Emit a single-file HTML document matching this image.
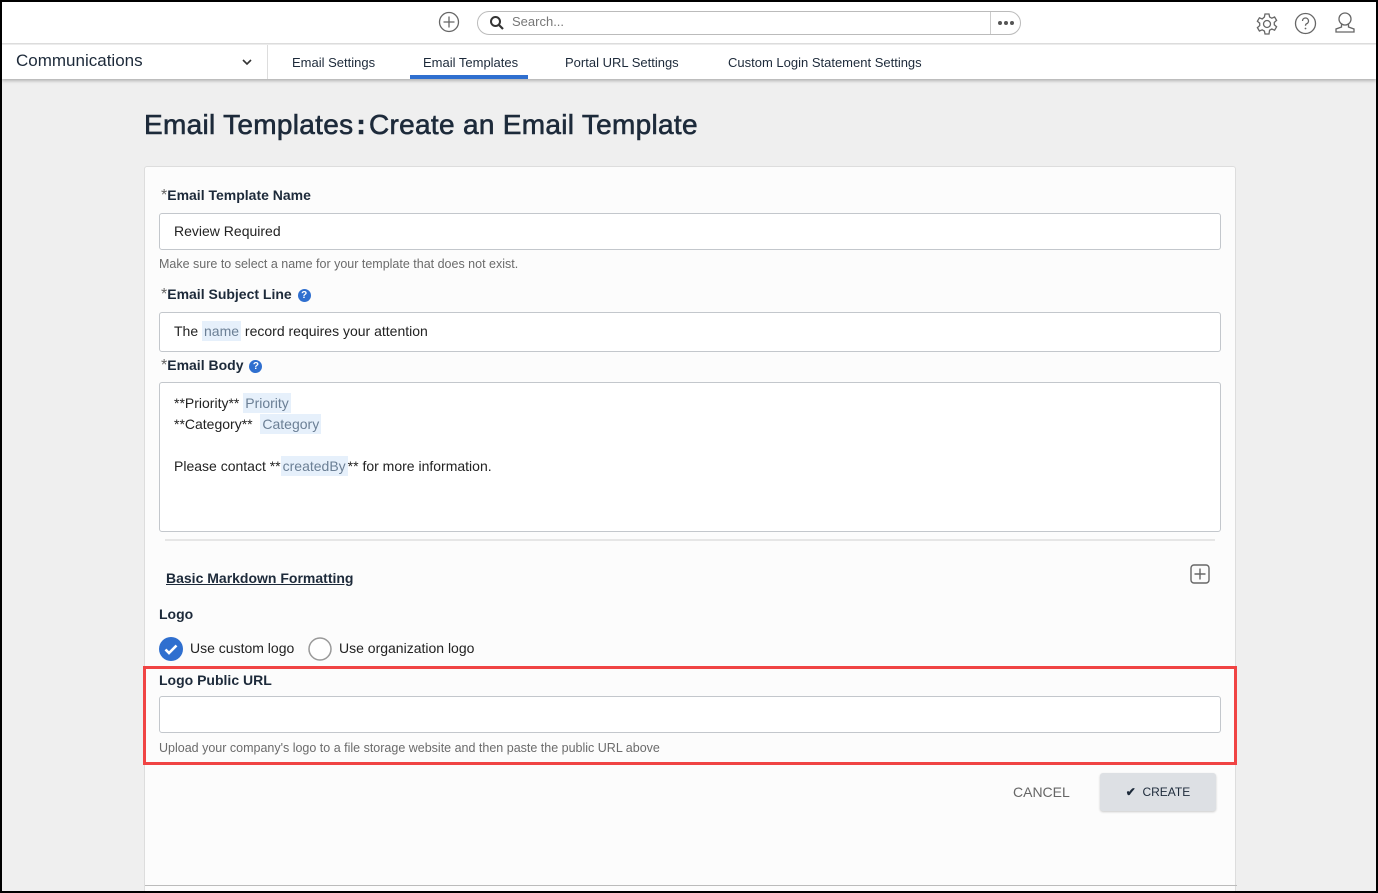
<!DOCTYPE html>
<html><head><style>
*{box-sizing:border-box;margin:0;padding:0}
body{width:1378px;height:893px;overflow:hidden;font-family:"Liberation Sans",sans-serif;background:#000;position:relative}
#frame{position:absolute;left:2px;top:2px;width:1374px;height:889px;background:#efefef;overflow:hidden}
.top{position:absolute;left:0;top:0;width:1374px;height:42px;background:#fff;border-bottom:1px solid #ddd}
.nav{position:absolute;left:0;top:43px;width:1374px;height:34px;background:#fff;box-shadow:0 2px 3px rgba(0,0,0,.25)}
.abs{position:absolute}
.navi{position:absolute;top:10px;font-size:13px;color:#1d2a3a}
.card{position:absolute;left:142px;top:164px;width:1092px;height:740px;background:#fcfcfc;border:1px solid #ddd;border-radius:3px}
.lbl{position:absolute;font-size:14px;font-weight:bold;color:#1d2a3a}
.star{color:#666;font-weight:normal;font-size:16px}
.inp{position:absolute;left:14px;width:1062px;background:#fff;border:1px solid #c3c7cc;border-radius:3px;font-size:14px;color:#222}
.help{position:absolute;font-size:12.5px;color:#6b6b6b}
.tag{background:#e6f0fb;color:#6b7f95;padding:2px 2px}
.q{display:inline-block;width:13px;height:13px;border-radius:50%;background:#2f6fcf;color:#fff;font-size:10px;text-align:center;line-height:13px;vertical-align:1px;margin-left:6px}
</style></head><body><div id="frame">
<div class="top">
<svg class="abs" style="left:436px;top:9px" width="22" height="22" viewBox="0 0 22 22"><circle cx="11" cy="11" r="9.5" fill="none" stroke="#666" stroke-width="1.3"/><path d="M11 5.5v11M5.5 11h11" stroke="#666" stroke-width="1.3"/></svg>
<div class="abs" style="left:475px;top:9px;width:544px;height:24px;border:1px solid #bbb;border-radius:12px"></div>
<div class="abs" style="left:988px;top:10px;width:1px;height:22px;background:#ccc"></div>
<svg class="abs" style="left:487px;top:13px" width="16" height="16" viewBox="0 0 16 16"><circle cx="6.5" cy="6.5" r="4.5" fill="none" stroke="#333" stroke-width="2"/><path d="M10 10l4 4" stroke="#333" stroke-width="2.2"/></svg>
<div class="abs" style="left:510px;top:12px;font-size:13px;color:#777">Search...</div>
<svg class="abs" style="left:995px;top:18px" width="18" height="6" viewBox="0 0 18 6"><circle cx="3" cy="3" r="2" fill="#555"/><circle cx="9" cy="3" r="2" fill="#555"/><circle cx="15" cy="3" r="2" fill="#555"/></svg>
<svg class="abs" style="left:1253px;top:10px" width="24" height="24" viewBox="0 0 24 24"><path d="M10 2h4l.6 3 2.2 1.2 2.8-1.2 2 3.4-2.3 2v2.4l2.3 2-2 3.4-2.8-1.2-2.2 1.2L14 22h-4l-.6-3-2.2-1.2-2.8 1.2-2-3.4 2.3-2v-2.4l-2.3-2 2-3.4 2.8 1.2L9.4 5z" fill="none" stroke="#666" stroke-width="1.3"/><circle cx="12" cy="12" r="3.5" fill="none" stroke="#666" stroke-width="1.3"/></svg>
<svg class="abs" style="left:1292px;top:10px" width="23" height="23" viewBox="0 0 23 23"><circle cx="11.5" cy="11.5" r="10" fill="none" stroke="#666" stroke-width="1.3"/><path d="M8.5 9a3 3 0 1 1 4 2.8c-.8.4-1 1-1 2" fill="none" stroke="#666" stroke-width="1.3"/><circle cx="11.5" cy="16.5" r=".9" fill="#666"/></svg>
<svg class="abs" style="left:1331px;top:9px" width="24" height="24" viewBox="0 0 24 24"><circle cx="12" cy="8" r="6" fill="none" stroke="#666" stroke-width="1.3"/><path d="M8.5 13.5v2.5L3 18v3h18v-3l-5.5-2v-2.5" fill="none" stroke="#666" stroke-width="1.3"/></svg>
</div>
<div class="nav">
<div class="abs" style="left:14px;top:6px;font-size:17px;color:#1d2a3a">Communications</div>
<svg class="abs" style="left:239px;top:12px" width="12" height="10" viewBox="0 0 12 10"><path d="M2 3l4 4 4-4" fill="none" stroke="#333" stroke-width="1.6"/></svg>
<div class="abs" style="left:265px;top:0;width:1px;height:34px;background:#ddd"></div>
<div class="navi" style="left:290px">Email Settings</div>
<div class="navi" style="left:421px">Email Templates</div>
<div class="abs" style="left:408px;top:30px;width:118px;height:4px;background:#2f6fcf"></div>
<div class="navi" style="left:563px">Portal URL Settings</div>
<div class="navi" style="left:726px">Custom Login Statement Settings</div>
</div>
<div class="abs" style="left:142px;top:107px;font-size:28px;color:#1d2a3a;-webkit-text-stroke:0.6px #1d2a3a;letter-spacing:0.3px">Email Templates<b style="margin:0 3px">:</b>Create an Email Template</div>
<div class="card">
<div class="lbl" style="left:16px;top:20px"><span class="star">*</span>Email Template Name</div>
<div class="inp" style="top:46px;height:37px;padding:9px 14px">Review Required</div>
<div class="help" style="left:14px;top:90px">Make sure to select a name for your template that does not exist.</div>
<div class="lbl" style="left:16px;top:119px"><span class="star">*</span>Email Subject Line<span class="q">?</span></div>
<div class="inp" style="top:145px;height:40px;padding:10px 14px">The <span class="tag">name</span> record requires your attention</div>
<div class="lbl" style="left:16px;top:190px"><span class="star">*</span>Email Body<span class="q">?</span></div>
<div class="inp" style="top:215px;height:150px;padding:10px 14px;line-height:21px">**Priority** <span class="tag">Priority</span><br>**Category** &nbsp;<span class="tag">Category</span><br><br>Please contact **<span class="tag">createdBy</span>** for more information.</div>
<div class="abs" style="left:20px;top:372px;width:1050px;height:2px;background:#e6e6e6"></div>
<div class="abs" style="left:21px;top:403px;font-size:14px;font-weight:bold;color:#1d2a3a;text-decoration:underline">Basic Markdown Formatting</div>
<svg class="abs" style="left:1045px;top:397px" width="20" height="20" viewBox="0 0 20 20"><rect x="1" y="1" width="18" height="18" rx="3" fill="none" stroke="#666" stroke-width="1.4"/><path d="M10 4.5v11M4.5 10h11" stroke="#666" stroke-width="1.4"/></svg>
<div class="lbl" style="left:14px;top:439px">Logo</div>
<svg class="abs" style="left:14px;top:470px" width="24" height="24" viewBox="0 0 24 24"><circle cx="12" cy="12" r="12" fill="#2f6fcf"/><path d="M6.5 12.5l3.5 3.5 7.5-7.5" fill="none" stroke="#fff" stroke-width="2.6"/></svg>
<div class="abs" style="left:45px;top:473px;font-size:14px;color:#222">Use custom logo</div>
<svg class="abs" style="left:163px;top:470px" width="24" height="24" viewBox="0 0 24 24"><circle cx="12" cy="12" r="11" fill="#fff" stroke="#999" stroke-width="1.5"/></svg>
<div class="abs" style="left:194px;top:473px;font-size:14px;color:#222">Use organization logo</div>
<div class="abs" style="left:-2px;top:499px;width:1094px;height:99px;border:3px solid #f04444"></div>
<div class="lbl" style="left:14px;top:505px">Logo Public URL</div>
<div class="inp" style="top:529px;height:37px"></div>
<div class="help" style="left:14px;top:574px">Upload your company's logo to a file storage website and then paste the public URL above</div>
<div class="abs" style="left:868px;top:617px;font-size:14px;color:#666">CANCEL</div>
<div class="abs" style="left:955px;top:606px;width:116px;height:38px;background:#dde0e4;border-radius:3px;box-shadow:0 1px 2px rgba(0,0,0,.2);font-size:12px;color:#1d2a3a;text-align:center;line-height:38px"><b>✔</b>&nbsp; CREATE</div>
<div class="abs" style="left:0;top:718px;width:1092px;height:1px;background:#bbb"></div>
</div>
</div></body></html>
